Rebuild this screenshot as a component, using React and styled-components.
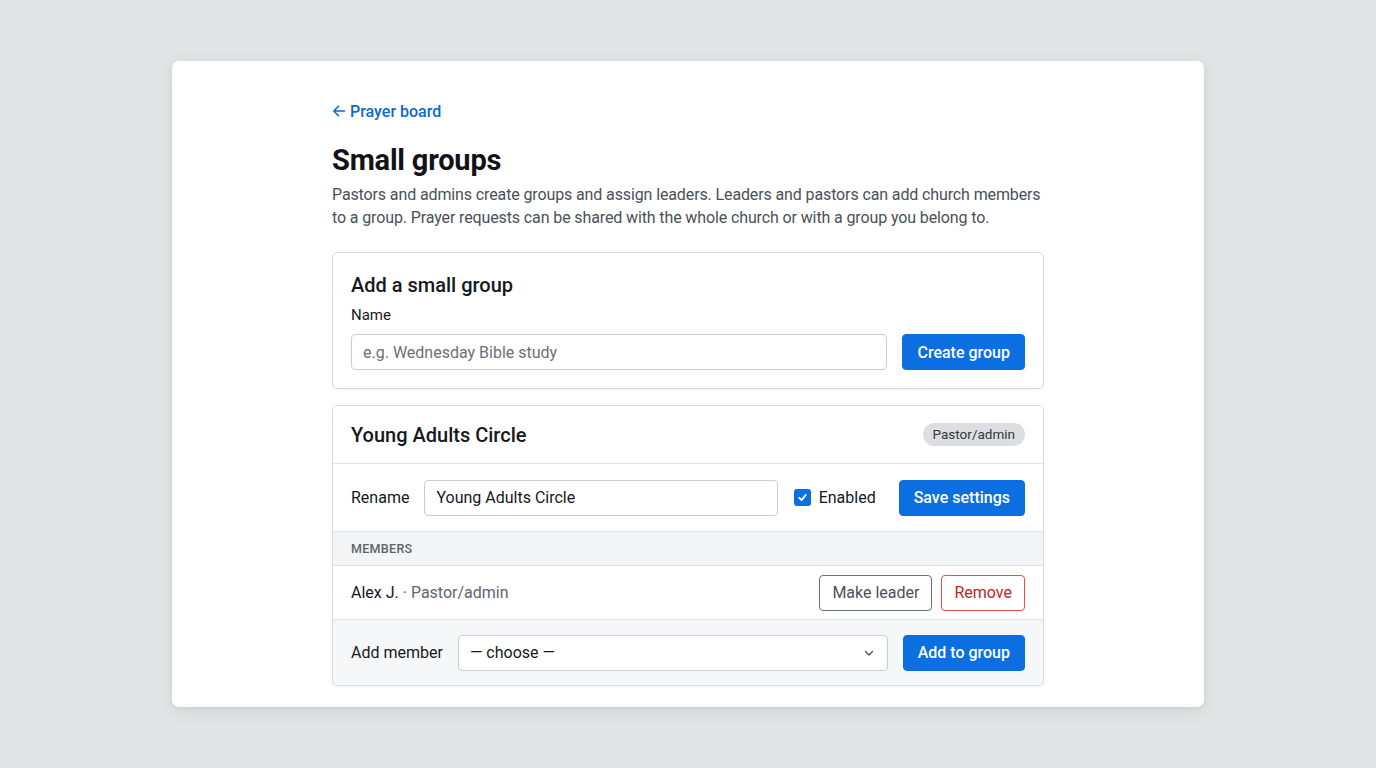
import React from "react";
import styled, { createGlobalStyle } from "styled-components";

const Global = createGlobalStyle`
  html, body { margin: 0; padding: 0; }
  body {
    background: #e3e4e6;
    font-family: Roboto, "Noto Sans", "Liberation Sans", sans-serif;
    color: #111827;
    -webkit-font-smoothing: antialiased;
  }
  * { box-sizing: border-box; }
`;

const Stage = styled.div`
  min-height: 768px;
  padding: 61px 172px;
`;

const Panel = styled.main`
  background: #fff;
  border-radius: 7px;
  box-shadow: 0 4px 18px rgba(0, 0, 0, 0.08), 0 1px 3px rgba(0, 0, 0, 0.06);
  padding: 40px 160px 21px;
  height: 646px;
`;

const Column = styled.div`
  width: 712px;
  display: flex;
  flex-direction: column;
`;

const BackLink = styled.a`
  color: #0b69d1;
  font-size: 16px;
  font-weight: 500;
  text-decoration: none;
  display: inline-flex;
  align-items: center;
  gap: 4px;
  height: 20px;
  margin-bottom: 21px;
  align-self: flex-start;
`;

const Title = styled.h1`
  margin: 0 0 5px;
  font-size: 29px;
  font-weight: 700;
  letter-spacing: -0.2px;
  line-height: 36px;
  color: #111318;
`;

const Intro = styled.p`
  margin: 0 0 23px;
  font-size: 16px;
  line-height: 23px;
  letter-spacing: -0.12px;
  color: #4b5058;
`;

const Card = styled.section`
  border: 1px solid #d9dbdf;
  border-radius: 5px;
  background: #fff;
  box-shadow: 0 1px 2px rgba(0, 0, 0, 0.05);
  margin-bottom: 16px;
  overflow: hidden;
`;

const CardBody = styled.div`
  padding: 19px 18px 18px 18px;
`;

const CardTitle = styled.h2`
  margin: 0;
  font-size: 20px;
  font-weight: 500;
  line-height: 26px;
  color: #16181d;
`;

const FieldLabel = styled.label`
  display: block;
  font-size: 15px;
  line-height: 20px;
  margin: 7px 0 9px;
  color: #16181d;
`;

const Row = styled.div`
  display: flex;
  align-items: center;
  gap: 15px;
`;

const TextInput = styled.input`
  flex: 1;
  min-width: 0;
  height: 36px;
  border: 1px solid #c9ccd1;
  border-radius: 4px;
  padding: 0 11px;
  font: inherit;
  font-size: 16px;
  color: #16181d;
  background: #fff;
  &::placeholder { color: #6b7078; }
`;

const Button = styled.button`
  height: 36px;
  padding: 0 ${(p) => p.$px || 14}px;
  border-radius: 4px;
  font: inherit;
  font-size: 16px;
  font-weight: ${(p) => (p.$variant === "primary" ? 500 : 400)};
  cursor: pointer;
  white-space: nowrap;
  background: ${(p) => (p.$variant === "primary" ? "#0b6fe2" : "#fff")};
  color: ${(p) =>
    p.$variant === "primary" ? "#fff" : p.$variant === "danger" ? "#c62222" : "#4b5058"};
  border: 1px solid
    ${(p) =>
      p.$variant === "primary" ? "#0b6fe2" : p.$variant === "danger" ? "#d9534f" : "#6b7078"};
`;

const Section = styled.div`
  display: flex;
  align-items: center;
  justify-content: ${(p) => p.$justify || "flex-start"};
  gap: ${(p) => p.$gap || 0}px;
  height: ${(p) => p.$h}px;
  padding: 0 18px 0 18px;
  background: ${(p) => p.$bg || "#fff"};
  border-top: ${(p) => (p.$first ? "none" : "1px solid #e1e3e6")};
`;

const GroupTitle = styled.h2`
  margin: 0;
  font-size: 20px;
  font-weight: 500;
  color: #16181d;
`;

const Badge = styled.span`
  background: #dcdee2;
  color: #33373d;
  font-size: 13.5px;
  font-weight: 400;
  padding: 0 10px;
  height: 23px;
  line-height: 23px;
  border-radius: 12px;
`;

const InlineLabel = styled.span`
  font-size: 16px;
  color: #16181d;
  white-space: nowrap;
`;

const Check = styled.span`
  width: 17px;
  height: 17px;
  border-radius: 3px;
  background: #0b6fe2;
  display: inline-flex;
  align-items: center;
  justify-content: center;
`;

const CheckWrap = styled.label`
  display: flex;
  align-items: center;
  gap: 8px;
  font-size: 16px;
  margin: 0 8px 0 1px;
`;

const SectionHead = styled.span`
  font-size: 12.5px;
  font-weight: 500;
  letter-spacing: 0.3px;
  color: #5d626a;
  text-transform: uppercase;
`;

const MemberName = styled.span`
  font-size: 16px;
  color: #16181d;
  flex: 1;
`;

const Muted = styled.span`
  color: #60656d;
`;

const SelectBox = styled.div`
  flex: 1;
  height: 36px;
  border: 1px solid #c9ccd1;
  border-radius: 4px;
  background: #fff;
  display: flex;
  align-items: center;
  justify-content: space-between;
  padding: 0 12px 0 11px;
  font-size: 16px;
  color: #16181d;
`;

export default function App() {
  return (
    <>
      <Global />
      <Stage>
        <Panel>
          <Column>
            <BackLink href="#">
              <svg width="14" height="14" viewBox="0 0 14 14" fill="none" stroke="#0b69d1" strokeWidth="1.6" strokeLinecap="round" strokeLinejoin="round">
                <path d="M12.5 7H1.8M6.5 2.3 1.8 7l4.7 4.7" />
              </svg>
              Prayer board
            </BackLink>
            <Title>Small groups</Title>
            <Intro>
              Pastors and admins create groups and assign leaders. Leaders and pastors can add church members
              to a group. Prayer requests can be shared with the whole church or with a group you belong to.
            </Intro>

            <Card>
              <CardBody>
                <CardTitle>Add a small group</CardTitle>
                <FieldLabel>Name</FieldLabel>
                <Row>
                  <TextInput placeholder="e.g. Wednesday Bible study" />
                  <Button $variant="primary">Create group</Button>
                </Row>
              </CardBody>
            </Card>

            <Card>
              <Section $first $h={57} $justify="space-between">
                <GroupTitle>Young Adults Circle</GroupTitle>
                <Badge>Pastor/admin</Badge>
              </Section>
              <Section $h={68} $gap={15}>
                <InlineLabel>Rename</InlineLabel>
                <TextInput defaultValue="Young Adults Circle" />
                <CheckWrap>
                  <Check>
                    <svg width="11" height="11" viewBox="0 0 12 12" fill="none" stroke="#fff" strokeWidth="2" strokeLinecap="round" strokeLinejoin="round">
                      <path d="M2.5 6.3 5 8.8l4.6-5.6" />
                    </svg>
                  </Check>
                  Enabled
                </CheckWrap>
                <Button $variant="primary">Save settings</Button>
              </Section>
              <Section $h={34} $bg="#f3f4f6">
                <SectionHead>Members</SectionHead>
              </Section>
              <Section $h={54} $gap={9}>
                <MemberName>
                  Alex J. <Muted>· Pastor/admin</Muted>
                </MemberName>
                <Button $px={12}>Make leader</Button>
                <Button $variant="danger" $px={12}>Remove</Button>
              </Section>
              <Section $h={66} $bg="#f6f7f8" $gap={15}>
                <InlineLabel>Add member</InlineLabel>
                <SelectBox>
                  <span>— choose —</span>
                  <svg width="12" height="12" viewBox="0 0 12 12" fill="none" stroke="#4b5058" strokeWidth="1.3" strokeLinecap="round" strokeLinejoin="round">
                    <path d="M2.5 4.5 6 8l3.5-3.5" />
                  </svg>
                </SelectBox>
                <Button $variant="primary">Add to group</Button>
              </Section>
            </Card>
          </Column>
        </Panel>
      </Stage>
    </>
  );
}
